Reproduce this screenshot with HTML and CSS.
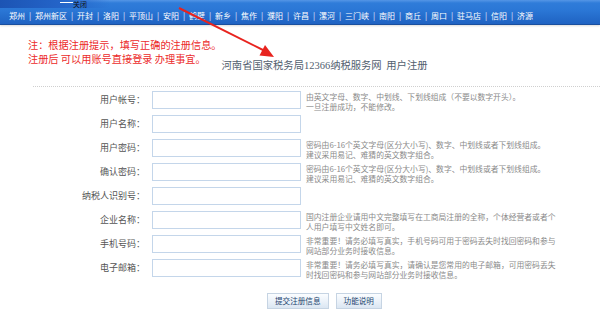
FILE: index.html
```html
<!DOCTYPE html>
<html lang="zh-CN">
<head>
<meta charset="utf-8">
<title>用户注册</title>
<link rel="stylesheet" href="styles.css">
</head>
<body>
<div class="page">
  <div class="topbar">
    <div class="strip"><span class="strip-line"></span><span class="close">关闭</span></div>
    <div class="nav">
      <span>郑州</span><i>|</i><span>郑州新区</span><i>|</i><span>开封</span><i>|</i><span>洛阳</span><i>|</i><span>平顶山</span><i>|</i><span>安阳</span><i>|</i><span>鹤壁</span><i>|</i><span>新乡</span><i>|</i><span>焦作</span><i>|</i><span>濮阳</span><i>|</i><span>许昌</span><i>|</i><span>漯河</span><i>|</i><span>三门峡</span><i>|</i><span>南阳</span><i>|</i><span>商丘</span><i>|</i><span>周口</span><i>|</i><span>驻马店</span><i>|</i><span>信阳</span><i>|</i><span>济源</span>
    </div>
  </div>

  <div class="header">
    <div class="notice">注：根据注册提示，填写正确的注册信息。<br>注册后 可以用账号直接登录 办理事宜。</div>
    <div class="title">河南省国家税务局<span class="num">12366</span>纳税服务网&nbsp;&nbsp;用户注册</div>
  </div>

  <div class="divider"></div>

  <div class="form">
    <div class="row"><label class="lbl">用户帐号：</label><span class="inp"></span><div class="hint">由英文字母、数字、中划线、下划线组成（不要以数字开头）。<br>一旦注册成功，不能修改。</div></div>
    <div class="row"><label class="lbl">用户名称：</label><span class="inp"></span><div class="hint"></div></div>
    <div class="row"><label class="lbl">用户密码：</label><span class="inp"></span><div class="hint">密码由6-16个英文字母(区分大小写)、数字、中划线或者下划线组成。<br>建议采用易记、难猜的英文数字组合。</div></div>
    <div class="row"><label class="lbl">确认密码：</label><span class="inp"></span><div class="hint">密码由6-16个英文字母(区分大小写)、数字、中划线或者下划线组成。<br>建议采用易记、难猜的英文数字组合。</div></div>
    <div class="row"><label class="lbl">纳税人识别号：</label><span class="inp"></span><div class="hint"></div></div>
    <div class="row"><label class="lbl">企业名称：</label><span class="inp"></span><div class="hint">国内注册企业请用中文完整填写在工商局注册的全称，个体经营者或者个<br>人用户填写中文姓名即可。</div></div>
    <div class="row"><label class="lbl">手机号码：</label><span class="inp"></span><div class="hint">非常重要！请务必填写真实，手机号码可用于密码丢失时找回密码和参与<br>网站部分业务时接收信息。</div></div>
    <div class="row"><label class="lbl">电子邮箱：</label><span class="inp"></span><div class="hint">非常重要！请务必填写真实，请确认是您常用的电子邮箱，可用密码丢失<br>时找回密码和参与网站部分业务时接收信息。</div></div>
  </div>

  <div class="buttons">
    <span class="btn">提交注册信息</span>
    <span class="btn">功能说明</span>
  </div>

  <svg class="arrow" width="600" height="70" viewBox="0 0 600 70">
    <line x1="179" y1="8" x2="265" y2="51" stroke="#e8231e" stroke-width="2"/>
    <polygon points="274,57 259.5,55.5 265,45" fill="#e8231e"/>
  </svg>
</div>
</body>
</html>
```

FILE: styles.css
```css
* { box-sizing: border-box; }
html, body { margin: 0; padding: 0; background: #fff; }
body {
  font-family: "Noto Sans CJK SC", "Noto Sans", sans-serif;
  width: 600px;
  height: 312px;
  overflow: hidden;
}
.page { position: relative; width: 600px; height: 312px; }

.topbar {
  height: 25px;
  background: linear-gradient(to bottom, #5596e6 0px, #2f7cd9 3px, #2b77d6 10px, #1f62c2 24px);
  border-bottom: 1px solid #1a4f9e;
  box-shadow: 0 1px 2px rgba(0,0,0,0.15);
}
.strip {
  height: 8px;
  display: flex;
  align-items: flex-start;
  background: linear-gradient(to right, #1c54b4 0, #2464c8 60px, transparent 110px);
}
.strip-line {
  width: 13px;
  height: 1px;
  margin: 2px 0 0 60px;
  background: #fff;
}
.close {
  font-size: 7px;
  line-height: 8px;
  color: #111;
}
.nav {
  height: 16px;
  display: flex;
  align-items: center;
  padding-left: 9px;
  color: #fff;
  font-size: 8px;
  line-height: 16px;
  white-space: nowrap;
}
.nav i {
  font-style: normal;
  width: 10px;
  text-align: center;
  color: #e6f0ff;
}

.header {
  display: flex;
  align-items: flex-start;
  margin-top: 13px;
  padding-left: 28px;
}
.notice {
  flex: 0 0 191px;
  color: #ec2b2b;
  font-size: 10.2px;
  line-height: 14px;
  white-space: nowrap;
}
.title {
  margin-top: 20px;
  color: #52606f;
  font-size: 10.3px;
  line-height: 13px;
  white-space: nowrap;
}
.title .num { font-family: "Liberation Serif", serif; font-size: 10.5px; }

.divider {
  margin: 14px 0 0 33px;
  border-top: 1px dotted #cfcfcf;
}

.form { padding-top: 4px; }
.row {
  display: flex;
  align-items: flex-start;
  height: 24px;
}
.lbl {
  width: 145px;
  text-align: right;
  font-size: 9px;
  line-height: 18px;
  color: #555;
  white-space: nowrap;
}
.inp {
  width: 149px;
  height: 18px;
  margin-left: 7px;
  border: 1px solid #c4d6ea;
  background: #fff;
}
.hint {
  margin: 1px 0 0 5px;
  font-size: 7.8px;
  line-height: 9.5px;
  color: #8a8a8a;
  white-space: nowrap;
}

.buttons {
  display: flex;
  gap: 7px;
  margin: 10px 0 0 267px;
}
.btn {
  height: 16px;
  padding: 0 7px;
  font-size: 7.6px;
  line-height: 14px;
  color: #24456f;
  border: 1px solid #c6d4e3;
  background: linear-gradient(to bottom, #fbfdff 0%, #e9f0f8 60%, #dbe6f2 100%);
  white-space: nowrap;
}

.arrow {
  position: absolute;
  top: 0;
  left: 0;
  pointer-events: none;
}
```
